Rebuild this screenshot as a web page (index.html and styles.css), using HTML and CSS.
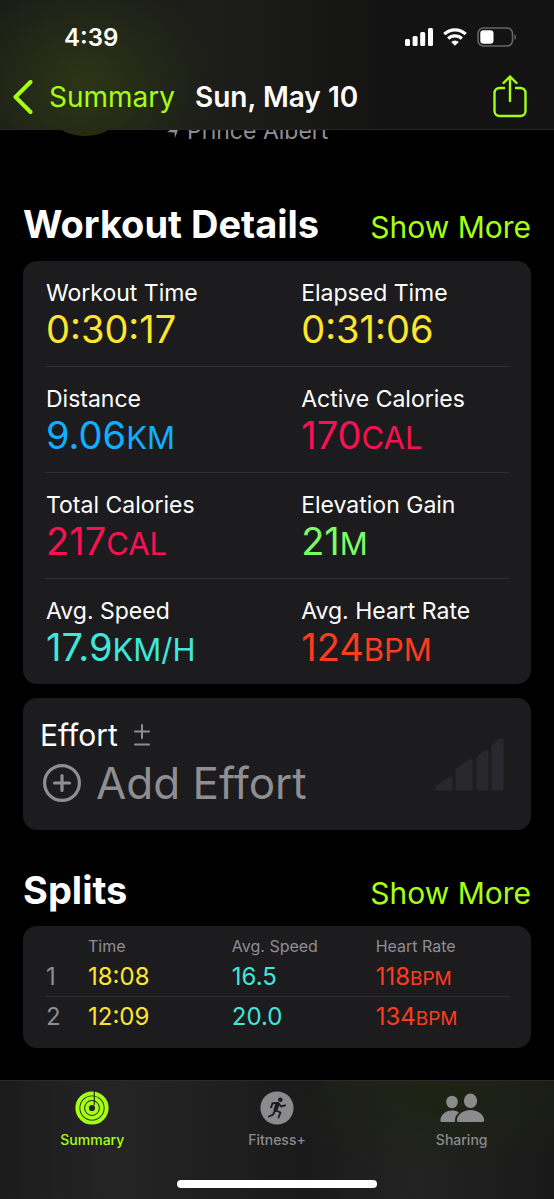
FILE: index.html
```html
<!DOCTYPE html>
<html lang="en">
<head>
<meta charset="utf-8">
<meta name="viewport" content="width=device-width, initial-scale=1">
<title>Workout – Sun, May 10</title>
<link rel="stylesheet" href="styles.css">
</head>
<body>
<div class="screen">
  <header class="top">
    <div class="status">
      <span class="clock">4:39</span>
      <span class="status-icons">
        <svg width="28" height="18" viewBox="0 0 28 18" fill="#fff" aria-hidden="true"><rect x="0" y="11" width="5" height="7" rx="1.5"/><rect x="7.6" y="8" width="5" height="10" rx="1.5"/><rect x="15.2" y="4" width="5" height="14" rx="1.5"/><rect x="23" y="0" width="5" height="18" rx="1.5"/></svg>
        <svg width="24" height="18" viewBox="0 0 24 18" fill="none" stroke="#fff" stroke-width="3.2" aria-hidden="true"><path d="M1.3 6.2a15.2 15.2 0 0 1 21.4 0"/><path d="M5.2 10.6a9.6 9.6 0 0 1 13.6 0"/><path d="M12 17.8l-3.8-3.7a5.4 5.4 0 0 1 7.6 0z" fill="#fff" stroke="none"/></svg>
        <svg width="40" height="20" viewBox="0 0 40 20" aria-hidden="true"><rect x="1" y="1" width="34.500" height="18" rx="5.500" fill="none" stroke="#67676a" stroke-width="1.500"/><rect x="3.300" y="3.300" width="13.200" height="13.400" rx="3.300" fill="#fff"/><path d="M37.500 7v6c2-.8 2-5.200 0-6z" fill="#67676a"/></svg>
      </span>
    </div>
    <nav class="nav">
      <a class="back" href="#summary">
        <svg width="20" height="34" viewBox="0 0 20 34" fill="none" stroke="currentColor" stroke-width="4" stroke-linecap="round" stroke-linejoin="round" aria-hidden="true"><path d="M17.500 2L2.500 17l15 15"/></svg>
        <span>Summary</span>
      </a>
      <h1 class="title">Sun, May 10</h1>
      <button class="share" type="button" aria-label="Share">
        <svg width="34" height="44" viewBox="0 0 34 44" fill="none" stroke="currentColor" stroke-width="2.400" stroke-linecap="round" stroke-linejoin="round" aria-hidden="true"><path d="M12 13H6.500a5 5 0 0 0-5 5v18a5 5 0 0 0 5 5h21a5 5 0 0 0 5-5V18a5 5 0 0 0-5-5H22" stroke-linecap="butt"/><path d="M17 26V1.500M10.500 8L17 1.500 23.500 8"/></svg>
      </button>
    </nav>
  </header>

  <main class="content">
    <div class="place">
      <span class="badge"></span>
      <svg width="14" height="14" viewBox="0 0 14 14" fill="#8e8e93" aria-hidden="true"><path d="M13 0L8 14 7.500 8.500 0 8z"/></svg>
      <span>Prince Albert</span>
    </div>

    <section>
      <div class="head"><h2>Workout Details</h2><a href="#details">Show More</a></div>
      <dl class="card stats">
        <div class="row">
          <div><dt>Workout Time</dt><dd class="yellow">0:30:17</dd></div>
          <div><dt>Elapsed Time</dt><dd class="yellow">0:31:06</dd></div>
        </div>
        <div class="row">
          <div><dt>Distance</dt><dd class="blue">9.06<small>KM</small></dd></div>
          <div><dt>Active Calories</dt><dd class="pink">170<small>CAL</small></dd></div>
        </div>
        <div class="row">
          <div><dt>Total Calories</dt><dd class="pink">217<small>CAL</small></dd></div>
          <div><dt>Elevation Gain</dt><dd class="green">21<small>M</small></dd></div>
        </div>
        <div class="row">
          <div><dt>Avg. Speed</dt><dd class="teal">17.9<small>KM/H</small></dd></div>
          <div><dt>Avg. Heart Rate</dt><dd class="red">124<small>BPM</small></dd></div>
        </div>
      </dl>
    </section>

    <button class="card effort" type="button">
      <span class="effort-text">
        <span class="effort-label">Effort
          <svg width="16" height="22" viewBox="0 0 16 22" fill="none" stroke="#8e8e93" stroke-width="2" stroke-linecap="round" aria-hidden="true"><path d="M8 1v13M1 7.500h14M1 20.500h14"/></svg>
        </span>
        <span class="effort-add">
          <svg width="40" height="40" viewBox="0 0 40 40" fill="none" stroke="#8e8e93" stroke-width="3.200" stroke-linecap="round" aria-hidden="true"><circle cx="20" cy="20" r="17.400"/><path d="M20 12.500v15M12.500 20h15"/></svg>
          Add Effort
        </span>
      </span>
      <svg class="bars" width="70" height="54" viewBox="0 0 70 54" fill="#29292d" stroke="#29292d" stroke-width="3" stroke-linejoin="round" aria-hidden="true"><path d="M3 50l13-9h1v11H3zM23 33l12-9h2v28H23zM44 21l7-6h2v37h-9zM59 9l7-6h2v49h-9z"/></svg>
    </button>

    <section>
      <div class="head"><h2>Splits</h2><a href="#splits">Show More</a></div>
      <div class="card splits">
        <table>
          <thead><tr><td></td><th scope="col">Time</th><th scope="col">Avg. Speed</th><th scope="col">Heart Rate</th></tr></thead>
          <tbody>
            <tr><th scope="row">1</th><td class="yellow">18:08</td><td class="teal">16.5</td><td class="red">118<small>BPM</small></td></tr>
            <tr><th scope="row">2</th><td class="yellow">12:09</td><td class="teal">20.0</td><td class="red">134<small>BPM</small></td></tr>
          </tbody>
        </table>
      </div>
    </section>
  </main>

  <nav class="tabs">
    <div class="tab-row">
      <a class="tab active" href="#summary">
        <svg width="34" height="34" viewBox="0 0 34 34" fill="none" aria-hidden="true"><g stroke="currentColor"><circle cx="17" cy="17" r="14.600" stroke-width="4"/><circle cx="17" cy="17" r="9.800" stroke-width="3.800"/><circle cx="17" cy="17" r="5" stroke-width="3.800"/></g><path d="M19.300 0v14" stroke="#26280f" stroke-width="1.200"/></svg>
        <span>Summary</span>
      </a>
      <a class="tab" href="#fitness">
        <svg width="34" height="34" viewBox="0 0 34 34" fill="none" aria-hidden="true"><circle cx="17" cy="17" r="16.600" fill="currentColor"/><circle cx="20.300" cy="8.700" r="2.300" fill="#1c1c1e"/><g stroke="#1c1c1e" stroke-linecap="round" stroke-linejoin="round"><path d="M17.500 13l-2 6" stroke-width="4"/><path d="M17 12l-4.500.3-1.500 4M18.800 12.500l2.200 3 4-1.200M16 19.500l4.500 2-2 5M15 19.500l-2 4.200-4 1.800" stroke-width="1.900"/></g></svg>
        <span>Fitness+</span>
      </a>
      <a class="tab" href="#sharing">
        <svg width="46" height="34" viewBox="0 0 46 34" fill="currentColor" aria-hidden="true"><ellipse cx="13" cy="11" rx="5.800" ry="6.200"/><path d="M16 31H3c-1.500 0-2-1-1.500-3 1.500-5.500 6-8.500 11.500-8.500 2.700 0 5 .6 7 2-3 2.300-4.500 5.500-4 9.500z"/><ellipse cx="31.500" cy="9.800" rx="6.600" ry="7.200"/><path d="M20 31c-2 0-2.500-1-2-3.200C19.300 22.500 25 19 31.500 19S43.700 22.500 45 27.800c.5 2.200 0 3.200-2 3.200z"/></svg>
        <span>Sharing</span>
      </a>
    </div>
    <span class="home"></span>
  </nav>
</div>
</body>
</html>
```
FILE: styles.css
```css
* { box-sizing: border-box; }
body {
  margin: 0;
  background: #000;
  color: #fff;
  font-family: Inter, "Liberation Sans", sans-serif;
}
h1, h2, dl, dd { margin: 0; }
a { color: #a6ff13; text-decoration: none; }
button { border: 0; padding: 0; background: none; color: inherit; font: inherit; }
svg { display: block; flex: none; }
small { line-height: 1; }

.yellow { color: #ffe62e; }
.blue { color: #0fb0ff; }
.pink { color: #fa1153; }
.green { color: #7dfc66; }
.teal { color: #40e6dc; }
.red { color: #ff3b20; }

.screen { display: flex; flex-direction: column; min-height: 100vh; overflow: hidden; }

.top {
  position: relative;
  z-index: 1;
  background:
    radial-gradient(ellipse 130px 110px at 85px 85px, #2c3616, transparent),
    linear-gradient(90deg, #1b1d17, #1d1d1a 40%, #131313 70%);
  border-bottom: 1px solid #262626;
}
.status {
  display: flex;
  justify-content: space-between;
  align-items: center;
  height: 74px;
  padding: 0 37px 0 64px;
}
.clock { font-size: 24px; font-weight: 600; }
.status-icons { display: flex; align-items: center; gap: 10px; }
.nav { display: flex; align-items: center; height: 55px; padding: 0 27px 10px 13px; }
.back { display: flex; align-items: center; gap: 16px; font-size: 28px; }
.title { margin-left: 20px; font-size: 28px; font-weight: 600; }
.share { margin-left: auto; color: #a6ff13; }

.content { flex: 1; padding: 0 23px; }
.place {
  display: flex;
  align-items: center;
  gap: 6px;
  height: 28px;
  margin-top: -13px;
  padding-left: 12px;
  color: #8e8e93;
  font-size: 23px;
}
.badge {
  align-self: flex-end;
  width: 100px;
  height: 100px;
  margin: 0 26px 9px 0;
  border-radius: 50%;
  background: #242d0c;
}
.head { display: flex; justify-content: space-between; align-items: baseline; }
.head h2 { font-size: 38px; line-height: 44px; }
.head a { font-size: 30px; line-height: 36px; }
section:first-of-type .head { margin-top: 57px; }
.card { border-radius: 14px; background: #1c1c1e; }
.stats { margin-top: 15px; padding: 0 22px; }
.row {
  display: grid;
  grid-template-columns: 11fr 9fr;
  padding: 18px 0 14px;
  border-bottom: 1px solid #303033;
}
.row:last-child { border-bottom: 0; }
.row > div { padding-left: 1px; }
dt { font-size: 23px; line-height: 28px; }
dd { font-size: 38px; line-height: 45px; }
dd small { font-size: 31px; }

.effort {
  display: flex;
  justify-content: space-between;
  align-items: center;
  width: 100%;
  margin: 14px 0 38px;
  padding: 18px 27px 18px 17px;
  text-align: left;
}
.effort-label { display: flex; align-items: center; gap: 16px; font-size: 30px; line-height: 38px; }
.effort-add { display: flex; align-items: center; gap: 14px; padding-left: 2px; color: #8e8e93; font-size: 44px; line-height: 58px; }

.splits { margin-top: 14px; padding: 9px 22px 12px; }
table { width: 100%; border-collapse: collapse; table-layout: fixed; }
th, td { width: 31%; padding: 0; font-weight: 400; text-align: left; line-height: 39px; font-size: 24px; }
thead th, thead td { color: #8e8e93; font-size: 16px; line-height: 22px; }
thead td:first-child { width: 43px; }
thead th:last-child { width: auto; }
tbody th { padding-left: 1px; color: #8e8e93; }
tbody tr + tr { border-top: 1px solid #303033; }
td small { font-size: 19px; }

.tabs {
  border-top: 1px solid #2b2b2d;
  background:
    radial-gradient(ellipse 170px 80px at 80% 10%, #1e2313, transparent),
    linear-gradient(90deg, #1b1b1c, #252526 20%, #1a1a1b 55%, #232323 75%, #191919);
}
.tab-row { display: grid; grid-template-columns: repeat(3, 1fr); padding-top: 10px; }
.tab { display: flex; flex-direction: column; align-items: center; gap: 6px; color: #8b8b8d; font-size: 14px; line-height: 18px; }
.tab span { font-weight: 500; }
.tab.active { color: #a6ff13; }
.home { display: block; width: 36%; height: 8px; margin: 31px auto 11px; border-radius: 4px; background: #fff; }
```
